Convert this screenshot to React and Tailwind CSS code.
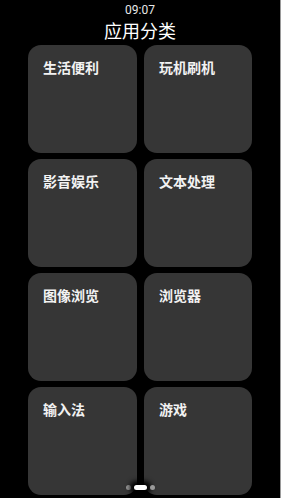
import React from "react";

const cards = ["生活便利", "玩机刷机", "影音娱乐", "文本处理", "图像浏览", "浏览器", "输入法", "游戏"];

export default function App() {
  return (
    <div
      className="relative w-[281px] h-[498px] bg-black overflow-hidden border-r border-[#9a9a9a] text-white"
      style={{ fontFamily: '"Noto Sans CJK SC", "Noto Sans", sans-serif' }}
    >
      <div className="pt-[3px] flex flex-col items-center">
        <div
          className="text-[12px] leading-[14px] text-[#e8e8e8]"
          style={{ fontFamily: 'Roboto, "Liberation Sans", sans-serif' }}
        >
          09:07
        </div>
        <div className="text-[18px] leading-[26px] text-white">应用分类</div>
      </div>
      <div className="mt-[2px] ml-[28px] grid grid-cols-[109px_108px] auto-rows-[108px] gap-x-[7px] gap-y-[6px]">
        {cards.map((c) => (
          <div key={c} className="bg-[#363636] rounded-[13px] pl-[15px] pt-[12px]">
            <div className="text-[14px] leading-[20px] font-bold text-[#f2f2f2]">{c}</div>
          </div>
        ))}
      </div>
      <div className="absolute left-0 right-0 top-[485px] flex justify-center items-center gap-[3px]">
        <div className="w-[5px] h-[5px] rounded-full bg-[#9a9a9a]" />
        <div className="w-[13px] h-[5px] rounded-full bg-white shadow-[0_0_5px_4px_#000]" />
        <div className="w-[5px] h-[5px] rounded-full bg-[#9a9a9a]" />
      </div>
    </div>
  );
}
